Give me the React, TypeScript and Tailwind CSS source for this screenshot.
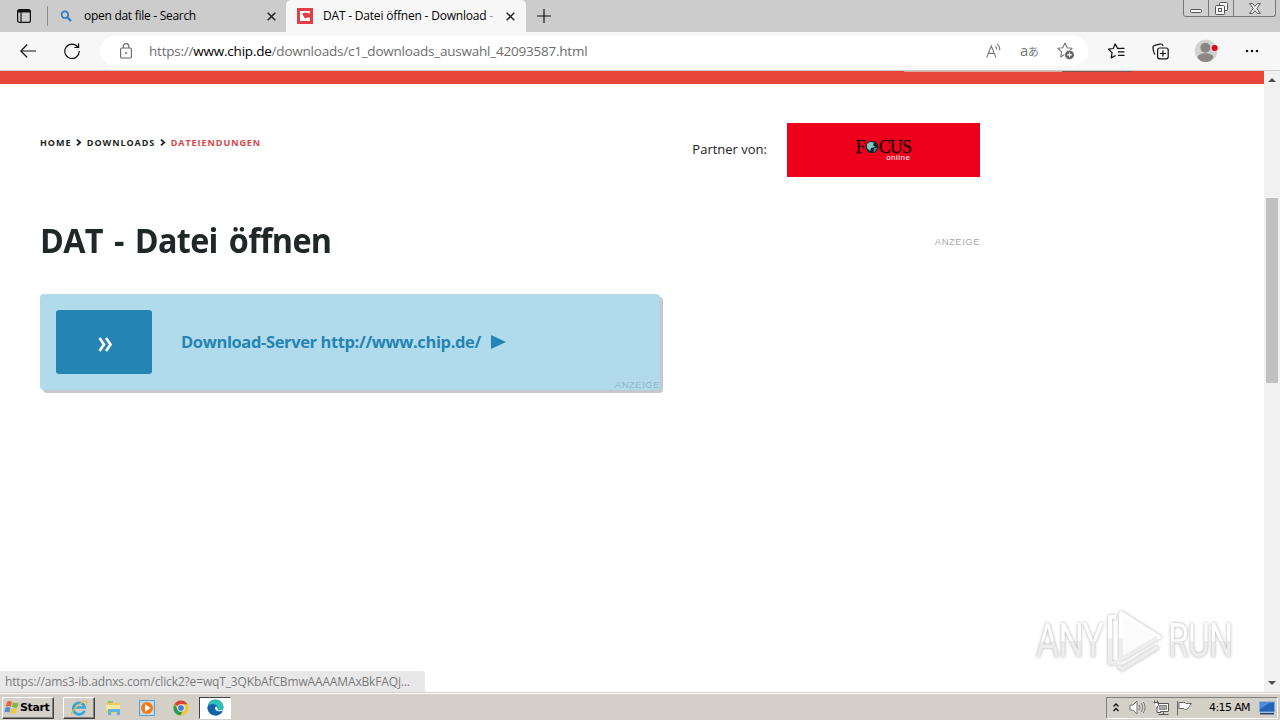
import React from "react";

const ui = "font-['Open_Sans','Noto_Sans',sans-serif]";

function CloseX() {
  return (
    <svg width="9" height="9" viewBox="0 0 9 9" stroke="#222" strokeWidth="1.5" fill="none">
      <path d="M.7 .7l7.6 7.6M8.3 .7L.7 8.3" />
    </svg>
  );
}

function TabBar() {
  return (
    <div className="relative flex h-8 shrink-0 items-stretch bg-[#cccccc]">
      <div className="flex w-[47px] items-center justify-center pl-px">
        <svg width="14" height="14" viewBox="0 0 14 14" fill="none" stroke="#111" strokeWidth="1.2">
          <rect x=".6" y=".6" width="12.8" height="12.8" rx="2" />
          <path d="M.6 2.2h12.8" strokeWidth="2.6" />
          <path d="M4 3v10" />
        </svg>
      </div>
      <div className="my-[6px] w-px bg-[#8b8b8b]" />
      <div className="flex w-[238px] items-center pl-[12px] pr-[10px]">
        <svg width="12" height="12" viewBox="0 0 12 12" fill="none" stroke="#2e7cc4" strokeWidth="1.7">
          <circle cx="4.9" cy="4.7" r="3.3" />
          <path d="M7.4 7.2l3.6 3.8" strokeWidth="2" />
        </svg>
        <span className="ml-[12px] flex-1 whitespace-nowrap text-[12px] tracking-[-0.28px] text-black">open dat file - Search</span>
        <CloseX />
      </div>
      <div className="flex w-[240px] items-center rounded-t-[5px] bg-[#f7f7f7] pl-[11px] pr-[11px]">
        <svg width="16" height="16" viewBox="0 0 16 16">
          <path d="M0 0h16v16H0z" fill="#e23e44" />
          <path d="M3 3h10v3.500L10.500 5H6.500L5.500 6.500 8 10.500 10.500 9.500H13V13H3z" fill="#fff" />
          <path d="M5.500 6L7 4.700h3.500L13 6v3H9.500L8 10.500 7.500 8z" fill="#e23e44" />
        </svg>
        <span className="ml-[10px] flex-1 whitespace-nowrap text-[12px] tracking-[-0.2px] text-black">
          DAT - Datei öffnen - Download <span className="text-[#999]">-</span>
        </span>
        <CloseX />
      </div>
      <div className="flex w-[35px] items-center justify-center">
        <svg width="14" height="14" viewBox="0 0 14 14" stroke="#111" strokeWidth="1.2">
          <path d="M7 0v14M0 7h14" />
        </svg>
      </div>
      <div className="ml-auto mr-[4px] flex h-[17px] rounded-b-[3px] border border-t-0 border-[#777] bg-[#d0d0d0]">
        <div className="flex w-[25px] items-end justify-center border-r border-[#777] pb-[3px]">
          <svg width="12" height="4" viewBox="0 0 12 4" fill="#f5f5f5" stroke="#555">
            <rect x=".5" y=".5" width="11" height="3" rx="1" />
          </svg>
        </div>
        <div className="flex w-[25px] items-center justify-center border-r border-[#777]">
          <svg width="13" height="13" viewBox="0 0 13 13" fill="#f5f5f5" stroke="#555">
            <rect x="4.5" y=".5" width="8" height="8" rx="1" />
            <rect x=".5" y="3.5" width="9" height="9" rx="1" />
            <rect x="3.5" y="6.5" width="3" height="3" />
          </svg>
        </div>
        <div className="flex w-[41px] items-center justify-center">
          <svg width="12" height="11" viewBox="0 0 12 11" fill="#f5f5f5" stroke="#555" strokeLinejoin="round">
            <path d="M.6 .6h3L6 3.4 8.4.6h3L7.800 5.500l3.600 4.900h-3L6 7.600 3.600 10.400h-3l3.600-4.900z" />
          </svg>
        </div>
      </div>
    </div>
  );
}

function Toolbar() {
  return (
    <div className="flex h-[39px] shrink-0 items-center border-b border-[#ccc] bg-[#f7f7f7]">
      <div className="flex w-[100px] items-center pl-[20px]">
        <svg width="16" height="14" viewBox="0 0 16 14" fill="none" stroke="#111" strokeWidth="1.2">
          <path d="M7.2 .5L.8 7l6.4 6.5M.8 7H16" />
        </svg>
        <svg className="ml-[28px]" width="16" height="16" viewBox="0 0 16 16" fill="none" stroke="#111" strokeWidth="1.2">
          <path d="M13.9 4.2A7.2 7.2 0 1 0 15.2 8M14.6 .3v4.2h-4.2" />
        </svg>
      </div>
      <div className="flex h-[30px] w-[988px] items-center rounded-full bg-white pl-[20px] pr-[13px]">
        <svg width="12" height="16" viewBox="0 0 12 16" fill="none" stroke="#666" strokeWidth="1.1">
          <rect x=".6" y="5" width="10.8" height="10" rx="1.3" />
          <path d="M3.2 5V3.400a2.800 2.800 0 0 1 5.600 0V5" />
          <circle cx="6" cy="10" r=".9" fill="#666" stroke="none" />
        </svg>
        <span className="ml-[17px] flex-1 whitespace-nowrap text-[13.5px] tracking-[-0.22px] text-[#6e6e6e]">
          https://<span className="text-black">www.chip.de</span>/downloads/c1_downloads_auswahl_42093587.html
        </span>
        <svg width="16" height="16" viewBox="0 0 16 16" fill="none" stroke="#777" strokeWidth="1.1">
          <path d="M.6 14.600L5.300 3l4.700 11.600M2.300 10.400h6M9.400 3.400c1 .8 1.400 1.900 1.300 3.200M11.300 1.200c1.900 1.600 2.700 3.600 2.400 6" />
        </svg>
        <span className="ml-[18px] -mt-px w-[18px] whitespace-nowrap text-[15px] leading-none tracking-[-0.6px] text-[#777] font-['Open_Sans','Noto_Sans_CJK_JP',sans-serif]">
          a<span className="text-[11px]">あ</span>
        </span>
        <svg className="ml-[19px]" width="18" height="18" viewBox="0 0 18 18">
          <path d="M8 1l2.100 4.800 5 .5-3.800 3.500 1 5.200L8 12.300 3.600 15l1-5.200L.8 6.300l5-.5z" fill="none" stroke="#777" strokeWidth="1.1" strokeLinejoin="round" />
          <circle cx="12.500" cy="12.900" r="5.200" fill="#fff" />
          <circle cx="12.500" cy="12.900" r="4.500" fill="#666" />
          <path d="M12.500 10.500v4.800M10.100 12.900h4.800" stroke="#fff" strokeWidth="1.1" />
        </svg>
      </div>
      <svg className="ml-[20px]" width="17" height="16" viewBox="0 0 17 16" fill="none" stroke="#111" strokeWidth="1.2">
        <path d="M9.500 5.300L7.200 .9 5.200 5.500.5 6.200l3.600 3.400-.9 5.300 4.400-2.400M9 5.300h7.500M10 8.800h6.500M10 12.400h6.500" strokeLinejoin="round" />
      </svg>
      <svg className="ml-[27px]" width="17" height="17" viewBox="0 0 17 17" fill="none" stroke="#111" strokeWidth="1.2">
        <path d="M3.300 11.500C1.600 10.500 1.700 9.400 1.200 6.500.7 3.200.8 2.900 3.700 2.200l4.100-1C10.200.7 10.600 1 11.100 3" />
        <rect x="5.600" y="5" width="10.600" height="10.800" rx="2" />
        <path d="M10.900 7.500v6M7.900 10.500h6" />
      </svg>
      <svg className="ml-[25px]" width="24" height="24" viewBox="0 0 24 24">
        <circle cx="12" cy="12" r="11.300" fill="#d2d2d0" />
        <circle cx="11.400" cy="8.800" r="5" fill="#8b8585" />
        <path d="M3.500 18.200c1-3 4-4 8-4s7.200 1 8 4c-1.700 2.900-4.500 4.800-8 4.800s-6.500-1.900-8-4.800z" fill="#8b8585" />
        <circle cx="20.700" cy="9" r="3" fill="#e3001b" />
      </svg>
      <svg className="ml-[27px]" width="14" height="4" viewBox="0 0 14 4" fill="#111">
        <circle cx="2" cy="2" r="1.300" /><circle cx="7" cy="2" r="1.300" /><circle cx="12" cy="2" r="1.300" />
      </svg>
    </div>
  );
}

function Chevron() {
  return (
    <svg className="ml-[4.4px] mr-[5px]" width="6" height="7" viewBox="0 0 6 7" fill="none" stroke="#222" strokeWidth="1.800">
      <path d="M1 .6l3.200 2.900L1 6.400" />
    </svg>
  );
}

function Focus() {
  return (
    <div className="flex h-[54px] w-[193px] justify-center bg-[#ee001c] pt-[16px]">
      <div className="w-[56px]">
        <div className="flex h-[16px] items-center font-['Liberation_Serif',serif] text-[18px] leading-[16px] tracking-[-0.85px] text-[#24050a] [-webkit-text-stroke:0.3px_#24050a]">
          <span>F</span>
          <svg className="shrink-0" width="14" height="14" viewBox="0 0 14 14">
            <circle cx="7" cy="7" r="6.200" fill="#13282d" stroke="none" />
            <path d="M2 4l3-2 4 .5L8 5l2 2-4 1-1 3-3-3z" fill="#7fc8c4" stroke="none" />
            <path d="M9 8l3 0-1.500 3-2 1z" fill="#3e8f92" stroke="none" />
          </svg>
          <span>CUS</span>
        </div>
        <div className="pr-px text-right font-['Liberation_Sans',sans-serif] text-[8px] leading-[6px] tracking-[0.5px] text-white">online</div>
      </div>
    </div>
  );
}

const markText = "inline-block origin-left whitespace-nowrap bg-linear-to-b from-white from-50% to-[#ededed] to-50% bg-clip-text pr-1 text-transparent";

function Watermark() {
  return (
    <div className="absolute bottom-[18px] right-[45px] flex h-[66px] items-center font-['Roboto',sans-serif] text-[48px] leading-none">
      <div className="w-[66px] drop-shadow-[0_0_1.5px_#aaa]">
        <span className={`scale-x-[.74] tracking-[-1px] ${markText}`}>ANY</span>
      </div>
      <svg className="mx-[3px] drop-shadow-[0_0_1.5px_#aaa]" width="60" height="66" viewBox="0 0 60 66" fill="none" strokeWidth="4" strokeLinejoin="round">
        <path d="M16 5v46l38-22z" fill="#fbfbfb" stroke="#fff" />
        <path d="M16 30v21l36-21" stroke="#ededed" />
        <path d="M11 9H5v21" stroke="#fff" />
        <path d="M5 30v25h6M13 58l4 3 36-22" stroke="#ededed" />
      </svg>
      <div className="w-[67px] drop-shadow-[0_0_1.5px_#aaa]">
        <span className={`scale-x-[.7] tracking-[-1px] ${markText}`}>RUN</span>
      </div>
    </div>
  );
}

function Page() {
  return (
    <div className="relative flex h-[621px] shrink-0 bg-white">
      <div className="flex-1">
        <div className="flex h-[13px] items-start bg-[#e8443a]">
          <div className="ml-[904px] h-px w-[158px] bg-[#d8aaa0]" />
          <div className="h-px w-[70px] bg-[#7e5850]" />
        </div>
        <div className="ml-10 w-[940px] pt-[39px]">
          <div className="flex h-[54px] justify-between">
            <div className="flex h-[39px] items-center text-[9px] font-bold leading-none tracking-[0.95px] text-[#1b1f20]">
              <span className="whitespace-nowrap">HOME</span>
              <Chevron />
              <span className="whitespace-nowrap">DOWNLOADS</span>
              <Chevron />
              <span className="whitespace-nowrap text-[#d6474b]">DATEIENDUNGEN</span>
            </div>
            <div className="flex items-center">
              <span className="mr-[20px] whitespace-nowrap text-[13px] text-[#222]">Partner von:</span>
              <Focus />
            </div>
          </div>
          <div className="mt-[37px] flex h-[54px] items-center justify-between">
            <h1 className="-mt-[2px] origin-left scale-x-[.95] whitespace-nowrap text-[34px] font-bold leading-none tracking-[-0.7px] text-[#202728] [word-spacing:3.5px]">DAT - Datei öffnen</h1>
            <span className="mt-[2px] font-['Liberation_Sans',sans-serif] text-[9.5px] leading-none tracking-[0.5px] text-[#aaa]">ANZEIGE</span>
          </div>
          <div className="mt-[26px] flex h-[96px] w-[620px] rounded-[4px] bg-[#b1dbeb] p-4 shadow-[3px_3px_0_#c5c9ce]">
            <div className="flex h-16 w-24 items-center justify-center rounded-[3px] bg-[#2484b4]">
              <svg className="mt-[5px] ml-[2px]" width="15" height="15" viewBox="0 0 15 15" fill="none" stroke="#fff" strokeWidth="2.700">
                <path d="M1.500 1l4.500 6.500L1.500 14M8 1l4.500 6.500L8 14" />
              </svg>
            </div>
            <div className="ml-[29px] flex h-16 items-center text-[16.5px] font-bold text-[#2484b4]">
              <span className="whitespace-nowrap tracking-[-0.38px]">Download-Server http://www.chip.de/</span>
              <svg className="ml-[10px]" width="15" height="14" viewBox="0 0 15 14" fill="#2484b4"><path d="M0 0l15 7-15 7z" /></svg>
            </div>
            <span className="-mb-[15px] -mr-[16px] ml-auto self-end font-['Liberation_Sans',sans-serif] text-[9.5px] leading-none tracking-[0.5px] text-[#91b8ca]">ANZEIGE</span>
          </div>
        </div>
      </div>
      <div className="flex w-4 flex-col items-center justify-between bg-[#f1f1f1] py-[7px]">
        <svg width="8" height="4" viewBox="0 0 8 4" fill="#505050"><path d="M0 4l4-4 4 4z" /></svg>
        <div className="mb-[182px] h-[185px] w-3 bg-[#c1c1c1]" />
        <svg width="8" height="4" viewBox="0 0 8 4" fill="#505050"><path d="M0 0l4 4 4-4z" /></svg>
      </div>
      <div className="absolute bottom-0 left-0 flex h-[21px] w-[425px] items-center rounded-tr-[3px] bg-[#e8e8e8] pl-[5px] text-[12px] text-[#7a7a7a]">
        <span className="whitespace-nowrap tracking-[-0.15px]">https://ams3-ib.adnxs.com/click2?e=wqT_3QKbAfCBmwAAAAMAxBkFAQj...</span>
      </div>
      <Watermark />
    </div>
  );
}

const raised = "border border-t-white border-l-white border-r-[#404040] border-b-[#404040] shadow-[inset_-1px_-1px_0_#808080]";

function Taskbar() {
  return (
    <div className="flex h-7 shrink-0 items-center border-t border-[#d4d0c8] bg-[#d4cfc7] shadow-[inset_0_1px_0_#fff] font-['DejaVu_Sans',sans-serif]">
      <div className={`ml-[2px] mt-[2px] flex h-[22px] w-[52px] items-center pl-px ${raised}`}>
        <svg className="shrink-0" width="16" height="15" viewBox="0 0 16 15">
          <path d="M3 2c2-1.500 3.500-1 5 0L6.800 6.800c-1.500-1-3-1-5-.1z" fill="#e8613a" />
          <path d="M9 2.500c2 1 3.500 1 5.500 0L13.300 7.200c-2 1-3.500.8-5.400-.1z" fill="#77b943" />
          <path d="M1.500 7.700c2-1 3.500-.8 5 .2L5.300 12.500c-1.500-1-3-1-5 0z" fill="#4b91d1" />
          <path d="M7.500 8.200c2 1 3.500 1 5.500 0l-1.200 4.700c-2 1-3.500.8-5.500-.2z" fill="#f5c63c" />
        </svg>
        <span className="mt-px text-[11px] font-bold tracking-[-0.4px] text-black">Start</span>
      </div>
      <div className={`ml-[9px] mt-[2px] flex h-[22px] w-8 items-center justify-center ${raised}`}>
        <svg width="18" height="18" viewBox="0 0 18 18" fill="none">
          <path d="M14.500 11.800a5.800 5.800 0 1 1 .3-3.300H5" stroke="#3ba3df" strokeWidth="2.700" />
          <path d="M2 15.500C-.8 13 13.800.5 16.500 2.500c.8.700.5 2-.3 3.300" stroke="#e5bd45" strokeWidth="1.300" />
        </svg>
      </div>
      <svg className="ml-[10px] mt-[2px]" width="17" height="17" viewBox="0 0 17 17">
        <path d="M1 3h5l1 1h8v10H1z" fill="#e9cc68" />
        <path d="M3 2h5v2H3z" fill="#8fc46b" />
        <path d="M1 6h14v5H1z" fill="#f8e7a3" />
        <path d="M3 10h12v6h-3v-3H6v3H3z" fill="#62b3db" />
      </svg>
      <svg className="ml-[17px] mt-[2px]" width="16" height="16" viewBox="0 0 16 16">
        <path d="M.5 .5h15v15H.5z" fill="#bfdcf1" stroke="#659bc5" />
        <circle cx="8" cy="8" r="6" fill="#f17d16" />
        <path d="M6 4.300L11.500 8 6 11.700z" fill="#fff" />
      </svg>
      <svg className="ml-[18px] mt-[2px]" width="16" height="16" viewBox="0 0 16 16">
        <circle cx="8" cy="8" r="7.500" fill="#f4c62c" />
        <path d="M8 8L1.500 4.200A7.500 7.500 0 0 1 14.500 4.300H8z" fill="#db4437" />
        <path d="M8 8L4.800 9.800 1.500 4.200a7.500 7.500 0 0 0 5.700 11.300l3.400-5.700z" fill="#299b56" />
        <circle cx="8" cy="8" r="3.700" fill="#fff" /><circle cx="8" cy="8" r="2.900" fill="#3f7fe3" />
      </svg>
      <div className="ml-[10px] mt-[2px] flex h-[22px] w-8 items-center justify-center border border-b-white border-l-[#404040] border-r-white border-t-[#404040] bg-white">
        <svg width="17" height="17" viewBox="0 0 17 17">
          <circle cx="8.500" cy="8.500" r="8" fill="#177fc5" />
          <path d="M1 6.500C2.500 1 8-.5 12 1.500c3.500 1.800 5 5 4 8-.8 2-3 2.500-5.500 1.500C12 8 10 5.500 7 5 4 4.600 2 5.500 1 6.500z" fill="#2fc0b4" />
          <path d="M.5 8.500C2 5 7 4.500 9 7.500c-2 .5-2 3 0 4.500 2 1.400 4.500 1.100 6.500.3-2 4-7 5.200-10.500 3.200C2 13.800.4 11.500.5 8.500z" fill="#1460a5" />
          <path d="M9 7.500c-1.500 1-1.200 3 .5 4 2 1.200 4.500.9 7-.2V10c-1.500 1.500-4 1.500-6 1 .8-.8 0-2.500-1.500-3.500z" fill="#fff" />
        </svg>
      </div>
      <div className="ml-auto mr-[2px] mt-[2px] flex h-[22px] w-[172px] items-center border border-b-white border-l-[#808080] border-r-white border-t-[#808080] pl-[6px]">
        <svg width="6" height="9" viewBox="0 0 6 9" fill="none" stroke="#111" strokeWidth="1.300">
          <path d="M.5 3.500L3 1l2.500 2.500M.5 8L3 5.500 5.500 8" />
        </svg>
        <svg className="ml-[10px]" width="17" height="15" viewBox="0 0 17 15" fill="none" stroke="#777">
          <path d="M1 5h3l4-4v13L4 10H1z" fill="#fff" />
          <path d="M10 5c1 1.500 1 3.500 0 5M12.200 3.200c1.800 2.500 1.800 6 0 8.600M14.300 2c2.200 3.500 2.200 7.500 0 11" />
        </svg>
        <svg className="ml-[6px]" width="18" height="16" viewBox="0 0 18 16" fill="#fff" stroke="#555">
          <path d="M5.500 3.500h11v8h-11z" />
          <path d="M7.500 5.500h7v4h-7z" fill="#aaa" stroke="#888" />
          <path d="M6.500 14.500h10M11.500 11.500v3" />
          <path d="M2.500 .5v3M5.500 .5v3M1.500 2.500h5v3l-1.500 1.500v5.500h4" />
        </svg>
        <svg className="ml-[6px]" width="17" height="16" viewBox="0 0 17 16" fill="#fff" stroke="#666">
          <path d="M1.500 1v14.500M3 2.500h6l1 1h5.500l-2 3-3 3H9l-1-1H3z" />
        </svg>
        <span className="ml-[16px] mt-px w-[44px] whitespace-nowrap text-[11px] tracking-[-0.6px] text-black">4:15 AM</span>
        <svg className="ml-[6px]" width="16" height="14" viewBox="0 0 16 14">
          <path d="M.5 1h15v10H.5z" fill="#2464b5" stroke="#77a6db" />
          <path d="M1 1.500h10L1 8z" fill="#4b8fda" /><path d="M1 12h14v1.500H1z" fill="#26486d" />
        </svg>
      </div>
    </div>
  );
}

export default function App() {
  return (
    <div className={`flex h-[720px] w-[1280px] flex-col overflow-hidden bg-white ${ui}`}>
      <TabBar />
      <Toolbar />
      <Page />
      <Taskbar />
    </div>
  );
}
